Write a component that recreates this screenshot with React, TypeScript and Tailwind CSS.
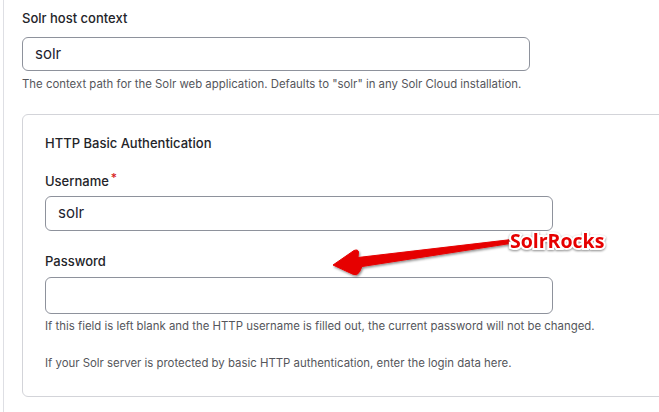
import React from "react";

// Annotation arrow drawn over the form
function RedArrow() {
  return (
    <svg
      className="absolute left-0 top-0 pointer-events-none"
      width="659"
      height="412"
      viewBox="0 0 659 412"
    >
      <defs>
        <filter id="arrowShadow" x="-10%" y="-50%" width="120%" height="200%">
          <feDropShadow dx="1" dy="1.5" stdDeviation="1" floodColor="#000" floodOpacity="0.45" />
        </filter>
      </defs>
      <path
        d="M333 265 L354 250.5 Q358 249 358.5 252 L358 257.5 L509 239.8 L509.6 243.6 L362 266.5 L359.5 272 Q357 276 353.5 274.5 Z"
        fill="#e60000"
        stroke="#e60000"
        strokeWidth="1"
        strokeLinejoin="round"
        filter="url(#arrowShadow)"
      />
    </svg>
  );
}

function TextInput({ value }: { value?: string }) {
  return (
    <div className="w-[508px] h-[35px] rounded-[6px] border border-[#8e929c] bg-white flex items-center px-[12px] text-[15px] text-[#222330]">
      {value}
    </div>
  );
}

export default function App() {
  return (
    <div className="relative w-[659px] h-[412px] overflow-hidden bg-white font-['Inter',sans-serif] text-[#232429]">
      <div className="ml-[3px] h-full border-l border-[#dedfe4] pl-[18px] pt-[10px]">
        {/* Solr host context */}
        <div className="text-[13px] leading-[16px] font-medium">Solr host context</div>
        <div className="mt-[11px] w-[508px] h-[34px] rounded-[6px] border border-[#8e929c] flex items-center px-[12px] text-[15px] text-[#222330]">
          solr
        </div>
        <p className="mt-[6px] text-[11.4px] leading-[14px] text-[#55565b]">
          The context path for the Solr web application. Defaults to "solr" in any Solr Cloud installation.
        </p>

        {/* Fieldset */}
        <div className="mt-[23px] w-[700px] h-[283px] rounded-[6px] border border-[#d3d4d9] pl-[22px] pt-[20px]">
          <div className="text-[13px] leading-[16px] font-medium">HTTP Basic Authentication</div>

          <div className="mt-[22px] text-[13px] leading-[16px] font-medium flex items-start">
            Username<span className="ml-[2px] -mt-[3px] text-[#d72222] text-[12px]">*</span>
          </div>
          <div className="mt-[7px]">
            <TextInput value="solr" />
          </div>

          <div className="mt-[22px] text-[13px] leading-[16px] font-medium">Password</div>
          <div className="mt-[8px] h-[37px]">
            <div className="w-[508px] h-[37px] rounded-[6px] border border-[#8e929c] bg-white" />
          </div>
          <p className="mt-[5px] text-[11.4px] leading-[14px] text-[#55565b]">
            If this field is left blank and the HTTP username is filled out, the current password will not be changed.
          </p>
          <p className="mt-[23px] text-[11.4px] leading-[14px] text-[#55565b]">
            If your Solr server is protected by basic HTTP authentication, enter the login data here.
          </p>
        </div>
      </div>

      <RedArrow />
      <div className="absolute left-[510px] top-[229px] font-['Open_Sans',sans-serif] font-bold text-[19.5px] leading-[24px] text-[#e60000] [-webkit-text-stroke:4px_white] [paint-order:stroke_fill] [filter:drop-shadow(0.5px_1px_1px_rgba(0,0,0,0.45))]">
        SolrRocks
      </div>
    </div>
  );
}
